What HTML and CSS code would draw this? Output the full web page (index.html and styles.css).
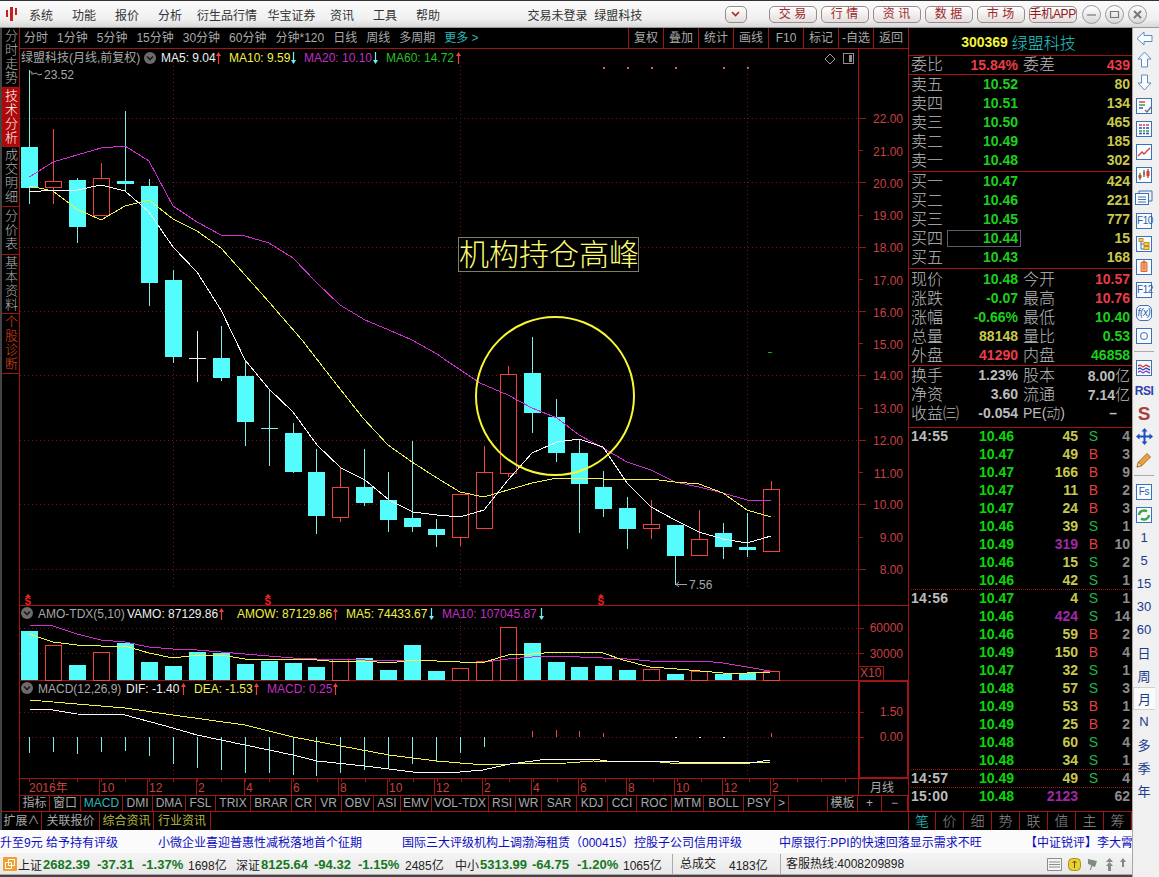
FILE: index.html
```html
<!DOCTYPE html>
<html lang="zh-CN">
<head>
    <meta charset="utf-8">
    <title>绿盟科技 月线</title>
    <link rel="stylesheet" href="styles.css">
</head>
<body>
<div class="window">
    <header class="titlebar">
        <svg class="logo" width="12" height="14" viewBox="0 0 12 14">
            <path class="logo-red" d="M0 3h2v7H0zM4 0h3v14H4zM9 1h2v7H9z"/>
        </svg>
        <nav class="menu">
            <span class="menu-item">系统</span>
            <span class="menu-item">功能</span>
            <span class="menu-item">报价</span>
            <span class="menu-item">分析</span>
            <span class="menu-item menu-wide5">衍生品行情</span>
            <span class="menu-item menu-wide4">华宝证券</span>
            <span class="menu-item">资讯</span>
            <span class="menu-item">工具</span>
            <span class="menu-item">帮助</span>
        </nav>
        <div class="login-state">交易未登录&nbsp; 绿盟科技</div>
        <button class="pill pill-drop">
            <svg width="9" height="6" viewBox="0 0 9 6"><path class="drop-mark" d="M1 1l3.5 3.5L8 1"/></svg>
        </button>
        <div class="pills">
            <button class="pill">交 易</button>
            <button class="pill">行 情</button>
            <button class="pill">资 讯</button>
            <button class="pill">数 据</button>
            <button class="pill">市 场</button>
            <button class="pill pill-app">手机APP</button>
        </div>
        <div class="win-btns">
            <span class="win-btn"><svg width="11" height="11" viewBox="0 0 11 11"><path class="win-mark" d="M1 6h9"/></svg></span>
            <span class="win-btn"><svg width="11" height="11" viewBox="0 0 11 11"><path class="win-mark" d="M1.5 2.5h8v6h-8z"/></svg></span>
            <span class="win-btn"><svg width="11" height="11" viewBox="0 0 11 11"><path class="win-mark win-mark-x" d="M2 2l7 7M9 2l-7 7"/></svg></span>
        </div>
    </header>

    <div class="body-row">
        <div class="content">
            <div class="top-block">
                <div class="left-stack">
                    <div class="chart-row">
                        <div class="side-tabs">
                            <div class="side-tab tab-h4">分时走势</div>
                            <div class="side-tab side-tab-on tab-h4">技术分析</div>
                            <div class="side-tab tab-h4">成交明细</div>
                            <div class="side-tab tab-h3">分价表</div>
                            <div class="side-tab tab-h4">基本资料</div>
                            <div class="side-tab side-tab-hot tab-h4">个股诊断</div>
                        </div>
                        <div class="chart-col">
                            <div class="toolbar">
                                <div class="periods">
                                    <span>分时</span><span>1分钟</span><span>5分钟</span><span>15分钟</span><span>30分钟</span><span>60分钟</span><span>分钟*120</span><span>日线</span><span>周线</span><span>多周期</span><span class="more">更多 &gt;</span>
                                </div>
                                <div class="tools">
                                    <span class="tool">复权</span><span class="tool">叠加</span><span class="tool">统计</span><span class="tool">画线</span><span class="tool">F10</span><span class="tool">标记</span><span class="tool">-自选</span><span class="tool">返回</span>
                                </div>
                            </div>

                            <svg class="chart" width="888" height="746" viewBox="20 49 888 746">
                                <defs>
                                    <g id="up"><path class="arrow-red" d="M3.5 1V12"/><path class="arrow-red-head" d="M3.5 0L6 4H1z"/></g>
                                    <g id="down"><path class="arrow-cy" d="M3.5 0V11"/><path class="arrow-cy-head" d="M3.5 12L6 8H1z"/></g>
                                    <g id="roll"><circle class="roll-bg" cx="6" cy="6" r="6"/><path class="roll-mark" d="M3 4.5L6 7.5L9 4.5"/></g>
                                    <g id="smark"><path class="s-head" d="M4 0L7 3H1z"/><text class="s-text" x="0.5" y="11">S</text></g>
                                </defs>

                                <!-- grid -->
                                <path class="grid" d="M20 118.5H858M20 182.5H858M20 247.5H858M20 311.5H858M20 375.5H858M20 440.5H858M20 504.5H858M20 569.5H858M20 628.5H858M20 653.5H858M20 712.5H858M20 737.5H858"/>
                                <path class="grid" d="M173.5 62V590M460.5 62V590M747.5 62V590M173.5 606V778M460.5 606V778M747.5 606V778"/>

                                <!-- frame -->
                                <path class="frame" d="M20 605.5H908M20 680.5H858M20 778.5H908M858.5 49V795"/>
                                <path class="frame-bold" d="M859 681H907.5V778H859z"/>
                                <path class="frame" d="M858 666.5H883.5V680"/>
                                <path class="frame" d="M99.5 779V795M147.5 779V795M196.5 779V795M244.5 779V795M291.5 779V795M338.5 779V795M387.5 779V795M434.5 779V795M482.5 779V795M531.5 779V795M578.5 779V795M626.5 779V795M674.5 779V795M722.5 779V795M770.5 779V795"/>
                                <path class="axis-ticks" d="M29 780.5H858"/>
                                <path class="frame" d="M858 118.5h8M858 150.5h5M858 182.5h8M858 215.5h5M858 247.5h8M858 279.5h5M858 311.5h8M858 343.5h5M858 375.5h8M858 408.5h5M858 440.5h8M858 472.5h5M858 504.5h8M858 537.5h5M858 569.5h8M858 628.5h6M858 653.5h6M858 712.5h6M858 737.5h6"/>

                                <!-- candles -->
                                <path class="wick-cy" d="M29.5 70V204M77.5 178V243M125.5 111V192M149.5 179V306M173.5 270V363M221.5 326V381M245.5 360V446M269.5 389V466M293.5 423V473M316.5 449V534M364.5 449V506M388.5 472V532M412.5 441V532M436.5 519V547M532.5 337V433M556.5 399V462M579.5 439V533M603.5 471V517M627.5 497V549M675.5 525V585M723.5 523V559M747.5 513V557"/>
                                <path class="wick-cy" d="M261 428.5H278"/>
                                <path class="wick-wh" d="M197.5 331V382M189 358.5H206"/>
                                <path class="wick-rd" d="M53.5 129V204M101.5 163V215M340.5 468V522M460.5 494V546M484.5 446V528M508.5 366V477M651.5 500V539M699.5 510V555M771.5 481V552"/>
                                <g class="body-dn">
                                    <rect x="21" y="147" width="17" height="41"/><rect x="69" y="180" width="17" height="47"/><rect x="117" y="181" width="17" height="3"/><rect x="141" y="186" width="17" height="97"/><rect x="165" y="280" width="17" height="77"/><rect x="213" y="358" width="17" height="20"/><rect x="237" y="376" width="17" height="46"/><rect x="285" y="433" width="17" height="39"/><rect x="308" y="472" width="17" height="44"/><rect x="356" y="487" width="17" height="16"/><rect x="380" y="500" width="17" height="20"/><rect x="404" y="518" width="17" height="9"/><rect x="428" y="529" width="17" height="6"/><rect x="524" y="373" width="17" height="40"/><rect x="548" y="417" width="17" height="36"/><rect x="571" y="453" width="17" height="31"/><rect x="595" y="487" width="17" height="22"/><rect x="619" y="508" width="17" height="21"/><rect x="667" y="525" width="17" height="31"/><rect x="715" y="533" width="17" height="14"/><rect x="739" y="547" width="17" height="3"/>
                                </g>
                                <g class="body-up">
                                    <rect x="45.5" y="181.5" width="16" height="6"/><rect x="93.5" y="178.5" width="16" height="37"/><rect x="332.5" y="487.5" width="16" height="30"/><rect x="452.5" y="494.5" width="16" height="43"/><rect x="476.5" y="472.5" width="16" height="56"/><rect x="500.5" y="374.5" width="16" height="99"/><rect x="643.5" y="524.5" width="16" height="4"/><rect x="691.5" y="539.5" width="16" height="16"/><rect x="763.5" y="489.5" width="16" height="62"/>
                                </g>

                                <!-- moving averages -->
                                <polyline class="ma ma20" points="29.5,177 53,162 77,155 101,148 125,146 149,161 173,206 197,222 221,235 245,236 269,243 293,258 317,283 340,305 365,320 389,330 412,340 437,354 450,363 480,383 508,395 532,408 557,418 579,435 603,448 627,462 651,470 675,482 699,487 723,493 747,500 771,501"/>
                                <polyline class="ma ma10" points="29.5,186 53,191 77,209 101,220 125,206 149,200 173,219 197,231 221,248 245,275 269,302 302,340 333,380 363,418 388,445 412,462 437,478 460,492 484,497 508,490 532,483 557,478 579,478 603,479 627,479 651,479 675,482 699,484 723,493 747,510 771,517"/>
                                <polyline class="ma ma5" points="29.5,192 53,190 77,190 101,185 125,191 149,212 173,247 197,272 221,310 245,360 269,389 293,412 317,445 341,468 365,480 389,500 413,512 437,515 460,517 484,510 508,480 532,453 557,442 579,439 603,447 627,483 651,507 675,520 699,532 723,539 747,543 771,536"/>

                                <!-- marks on the main chart -->
                                <path class="dots" d="M603 68h2M627 68h2M651 68h2M675 68h2M723 68h2M747 68h2"/>
                                <path class="green-dash" d="M768 352.5h4"/>
                                <path class="note-line" d="M30 72h2v3M33 74l3-1 3 2 3-1"/>
                                <path class="note-line" d="M676 584.5h11M679 582l-3 2.5 3 2.5"/>
                                <text class="t-gray" x="44" y="79">23.52</text>
                                <text class="t-gray" x="689" y="589">7.56</text>
                                <path class="note-line" d="M830 54l5 5-5 5-5-5z"/>
                                <rect class="mini-box" x="843.5" y="53.5" width="10" height="10"/>
                                <rect class="mini-fill" x="849" y="55" width="3" height="7"/>

                                <ellipse class="peak-ring" cx="555" cy="396" rx="79" ry="79"/>
                                <rect class="peak-box" x="458.5" y="237.5" width="180" height="34"/>
                                <text class="peak-text" x="459" y="265">机构持仓高峰</text>

                                <use href="#smark" x="24" y="594"/>
                                <use href="#smark" x="264" y="594"/>
                                <use href="#smark" x="597" y="594"/>

                                <!-- legend lines -->
                                <text class="t-gray" x="21" y="62">绿盟科技(月线,前复权)</text>
                                <use href="#roll" x="144" y="52"/>
                                <text class="t-white" x="161" y="62">MA5: 9.04</text><use href="#up" x="215" y="52"/>
                                <text class="t-yellow" x="229" y="62">MA10: 9.59</text><use href="#down" x="290" y="52"/>
                                <text class="t-magenta" x="304" y="62">MA20: 10.10</text><use href="#down" x="372" y="52"/>
                                <text class="t-green" x="386" y="62">MA60: 14.72</text><use href="#up" x="455" y="52"/>

                                <!-- axis labels -->
                                <g class="axis">
                                    <text x="903" y="123">22.00</text><text x="903" y="156">21.00</text><text x="903" y="188">20.00</text><text x="903" y="220">19.00</text><text x="903" y="252">18.00</text><text x="903" y="285">17.00</text><text x="903" y="317">16.00</text><text x="903" y="349">15.00</text><text x="903" y="380">14.00</text><text x="903" y="413">13.00</text><text x="903" y="445">12.00</text><text x="903" y="478">11.00</text><text x="903" y="509">10.00</text><text x="903" y="542">9.00</text><text x="903" y="574">8.00</text>
                                    <text x="903" y="632">60000</text><text x="903" y="658">30000</text><text x="903" y="716">1.50</text><text x="903" y="741">0.00</text>
                                </g>
                                <text class="t-axis" x="860" y="677">X10</text>

                                <!-- volume -->
                                <g class="body-dn">
                                    <rect x="21" y="631" width="17" height="49"/><rect x="69" y="665" width="17" height="15"/><rect x="117" y="643" width="17" height="37"/><rect x="141" y="662" width="17" height="18"/><rect x="165" y="666" width="17" height="14"/><rect x="189" y="652" width="17" height="28"/><rect x="213" y="653" width="17" height="27"/><rect x="237" y="664" width="17" height="16"/><rect x="261" y="661" width="17" height="19"/><rect x="285" y="663" width="17" height="17"/><rect x="308" y="667" width="17" height="13"/><rect x="356" y="658" width="17" height="22"/><rect x="380" y="670" width="17" height="10"/><rect x="404" y="645" width="17" height="35"/><rect x="428" y="671" width="17" height="9"/><rect x="524" y="643" width="17" height="37"/><rect x="548" y="662" width="17" height="18"/><rect x="571" y="667" width="17" height="13"/><rect x="595" y="666" width="17" height="14"/><rect x="619" y="670" width="17" height="10"/><rect x="667" y="674" width="17" height="6"/><rect x="715" y="674" width="17" height="6"/><rect x="739" y="673" width="17" height="7"/>
                                </g>
                                <g class="body-up">
                                    <rect x="45.5" y="645.5" width="16" height="35"/><rect x="93.5" y="652.5" width="16" height="28"/><rect x="332.5" y="659.5" width="16" height="21"/><rect x="452.5" y="668.5" width="16" height="12"/><rect x="476.5" y="661.5" width="16" height="19"/><rect x="500.5" y="627.5" width="16" height="53"/><rect x="643.5" y="669.5" width="16" height="11"/><rect x="691.5" y="671.5" width="16" height="9"/><rect x="763.5" y="671.5" width="16" height="9"/>
                                </g>
                                <polyline class="ma ma20" points="29.5,625 53,626 77,634 101,640 125,642 149,647 173,649 197,650 221,652 245,654 269,656 293,658 317,659 341,659 365,660 389,661 413,660 437,661 460,662 485,662 508,659 532,657 557,656 580,657 603,658 627,659 650,661 677,661 703,661 723,663 747,667 770,671"/>
                                <polyline class="ma ma10" points="29.5,634 53,642 77,645 101,646 125,646 149,653 173,658 197,655 221,655 245,659 269,659 293,659 317,660 341,662 365,661 389,663 413,660 437,661 460,662 485,662 508,655 532,654 557,652 580,652 603,653 623,660 650,667 677,669 700,671 723,673 747,673 770,672"/>

                                <use href="#roll" x="21" y="607"/>
                                <text class="t-gray" x="38" y="618">AMO-TDX(5,10)</text>
                                <text class="t-white" x="127" y="618">VAMO: 87129.86</text><use href="#up" x="218" y="608"/>
                                <text class="t-yellow" x="237" y="618">AMOW: 87129.86</text><use href="#up" x="332" y="608"/>
                                <text class="t-yellow" x="346" y="618">MA5: 74433.67</text><use href="#down" x="428" y="608"/>
                                <text class="t-magenta" x="442" y="618">MA10: 107045.87</text><use href="#down" x="538" y="608"/>

                                <!-- MACD -->
                                <path class="wick-cy" d="M29.5 737V753M53.5 737V752M77.5 737V754M101.5 737V752M125.5 737V751M149.5 737V756M173.5 737V764M197.5 737V768M221.5 737V770M245.5 737V773M269.5 737V773M293.5 737V775M316.5 737V776M340.5 737V773M364.5 737V770M388.5 737V768M412.5 737V764M436.5 737V762M460.5 737V753M484.5 737V747"/>
                                <path class="wick-rd" d="M532.5 731V737M556.5 730V737M579.5 731V737M603.5 733V737M771.5 733V737"/>
                                <path class="wick-wh" d="M675 737.5h2M699 737.5h2M723 737.5h2"/>
                                <polyline class="ma ma10" points="29.5,700 125,708 173,715 245,725 293,737 341,746 389,755 437,761 460,763 473,764 510,764 567,763 593,761 660,762 670,763 750,763 770,762"/>
                                <polyline class="ma ma5" points="29.5,709 53,710 77,714 125,715 173,728 197,735 245,745 293,755 317,761 365,766 413,772 437,773 460,772 483,770 510,764 533,761 547,759 592,759 607,761 750,763 770,760"/>

                                <use href="#roll" x="21" y="682"/>
                                <text class="t-gray" x="38" y="693">MACD(12,26,9)</text>
                                <text class="t-white" x="126" y="693">DIF: -1.40</text><use href="#up" x="180" y="683"/>
                                <text class="t-yellow" x="194" y="693">DEA: -1.53</text><use href="#up" x="253" y="683"/>
                                <text class="t-magenta" x="267" y="693">MACD: 0.25</text><use href="#up" x="332" y="683"/>

                                <!-- time axis -->
                                <g class="t-axis">
                                    <text x="29" y="792">2016年</text><text x="101" y="792">10</text><text x="149" y="792">12</text><text x="198" y="792">2</text><text x="246" y="792">4</text><text x="293" y="792">6</text><text x="340" y="792">8</text><text x="389" y="792">10</text><text x="436" y="792">12</text><text x="484" y="792">2</text><text x="533" y="792">4</text><text x="580" y="792">6</text><text x="628" y="792">8</text><text x="676" y="792">10</text><text x="724" y="792">12</text><text x="772" y="792">2</text>
                                </g>
                                <text class="t-gray" x="870" y="792">月线</text>
                            </svg>

                            <div class="index-tabs">
                                <span class="idx">指标</span><span class="idx">窗口</span><span class="idx idx-on">MACD</span><span class="idx">DMI</span><span class="idx">DMA</span><span class="idx">FSL</span><span class="idx">TRIX</span><span class="idx">BRAR</span><span class="idx">CR</span><span class="idx">VR</span><span class="idx">OBV</span><span class="idx">ASI</span><span class="idx">EMV</span><span class="idx">VOL-TDX</span><span class="idx">RSI</span><span class="idx">WR</span><span class="idx">SAR</span><span class="idx">KDJ</span><span class="idx">CCI</span><span class="idx">ROC</span><span class="idx">MTM</span><span class="idx">BOLL</span><span class="idx">PSY</span><span class="idx">&gt;</span><span class="idx"></span><span class="idx">模板</span><span class="idx">+</span><span class="idx">−</span>
                            </div>
                        </div>
                    </div>
                    <div class="ext-tabs">
                        <span class="ext">扩展∧</span><span class="ext">关联报价</span><span class="ext ext-on">综合资讯</span><span class="ext ext-on">行业资讯</span>
                    </div>
                </div>

                <aside class="quote">
                    <div class="q-head"><span class="q-code">300369</span><span class="q-name">绿盟科技</span></div>
                    <div class="q-group q-ratio">
                        <div class="q-row"><span>委比</span><b class="red">15.84%</b><span class="q-l2">委差</span><b class="red">439</b></div>
                    </div>
                    <div class="q-group q-book">
                        <div class="q-row"><span>卖五</span><b class="grn">10.52</b><span></span><b class="yel">80</b></div>
                        <div class="q-row"><span>卖四</span><b class="grn">10.51</b><span></span><b class="yel">134</b></div>
                        <div class="q-row"><span>卖三</span><b class="grn">10.50</b><span></span><b class="yel">465</b></div>
                        <div class="q-row"><span>卖二</span><b class="grn">10.49</b><span></span><b class="yel">185</b></div>
                        <div class="q-row"><span>卖一</span><b class="grn">10.48</b><span></span><b class="yel">302</b></div>
                    </div>
                    <div class="q-group q-book">
                        <div class="q-row"><span>买一</span><b class="grn">10.47</b><span></span><b class="yel">424</b></div>
                        <div class="q-row"><span>买二</span><b class="grn">10.46</b><span></span><b class="yel">221</b></div>
                        <div class="q-row"><span>买三</span><b class="grn">10.45</b><span></span><b class="yel">777</b></div>
                        <div class="q-row"><span>买四</span><b class="grn q-focus">10.44</b><span></span><b class="yel">15</b></div>
                        <div class="q-row"><span>买五</span><b class="grn">10.43</b><span></span><b class="yel">168</b></div>
                    </div>
                    <div class="q-group q-book q-pad">
                        <div class="q-row"><span>现价</span><b class="grn">10.48</b><span class="q-l2">今开</span><b class="red">10.57</b></div>
                        <div class="q-row"><span>涨跌</span><b class="grn">-0.07</b><span class="q-l2">最高</span><b class="red">10.76</b></div>
                        <div class="q-row"><span>涨幅</span><b class="grn">-0.66%</b><span class="q-l2">最低</span><b class="grn">10.40</b></div>
                        <div class="q-row"><span>总量</span><b class="yel">88148</b><span class="q-l2">量比</span><b class="grn">0.53</b></div>
                        <div class="q-row"><span>外盘</span><b class="red">41290</b><span class="q-l2">内盘</span><b class="grn">46858</b></div>
                    </div>
                    <div class="q-group q-stats">
                        <div class="q-row"><span>换手</span><b>1.23%</b><span class="q-l2">股本</span><b>8.00<i>亿</i></b></div>
                        <div class="q-row"><span>净资</span><b>3.60</b><span class="q-l2">流通</span><b>7.14<i>亿</i></b></div>
                        <div class="q-row"><span class="q-nowrap">收益㈢</span><b>-0.054</b><span class="q-l2 q-nowrap q-pe">PE(动)</span><b class="q-dash">–</b></div>
                    </div>
                    <div class="ticks">
                        <div class="tick-group">
                            <div class="tick"><span class="tm">14:55</span><b class="pr">10.46</b><b class="vl">45</b><b class="sd-s">S</b><b class="ct">4</b></div>
                            <div class="tick"><span></span><b class="pr">10.47</b><b class="vl">49</b><b class="sd-b">B</b><b class="ct">3</b></div>
                            <div class="tick"><span></span><b class="pr">10.47</b><b class="vl">166</b><b class="sd-b">B</b><b class="ct">9</b></div>
                            <div class="tick"><span></span><b class="pr">10.47</b><b class="vl">11</b><b class="sd-b">B</b><b class="ct">2</b></div>
                            <div class="tick"><span></span><b class="pr">10.47</b><b class="vl">24</b><b class="sd-b">B</b><b class="ct">3</b></div>
                            <div class="tick"><span></span><b class="pr">10.46</b><b class="vl">39</b><b class="sd-s">S</b><b class="ct">1</b></div>
                            <div class="tick"><span></span><b class="pr">10.49</b><b class="vl vl-big">319</b><b class="sd-b">B</b><b class="ct">10</b></div>
                            <div class="tick"><span></span><b class="pr">10.46</b><b class="vl">15</b><b class="sd-s">S</b><b class="ct">2</b></div>
                            <div class="tick"><span></span><b class="pr">10.46</b><b class="vl">42</b><b class="sd-s">S</b><b class="ct">1</b></div>
                        </div>
                        <div class="tick-group tick-next">
                            <div class="tick"><span class="tm">14:56</span><b class="pr">10.47</b><b class="vl">4</b><b class="sd-s">S</b><b class="ct">1</b></div>
                            <div class="tick"><span></span><b class="pr">10.46</b><b class="vl vl-big">424</b><b class="sd-s">S</b><b class="ct">14</b></div>
                            <div class="tick"><span></span><b class="pr">10.46</b><b class="vl">59</b><b class="sd-b">B</b><b class="ct">2</b></div>
                            <div class="tick"><span></span><b class="pr">10.49</b><b class="vl">150</b><b class="sd-b">B</b><b class="ct">4</b></div>
                            <div class="tick"><span></span><b class="pr">10.47</b><b class="vl">32</b><b class="sd-s">S</b><b class="ct">1</b></div>
                            <div class="tick"><span></span><b class="pr">10.48</b><b class="vl">57</b><b class="sd-s">S</b><b class="ct">3</b></div>
                            <div class="tick"><span></span><b class="pr">10.49</b><b class="vl">53</b><b class="sd-b">B</b><b class="ct">1</b></div>
                            <div class="tick"><span></span><b class="pr">10.49</b><b class="vl">25</b><b class="sd-b">B</b><b class="ct">2</b></div>
                            <div class="tick"><span></span><b class="pr">10.48</b><b class="vl">60</b><b class="sd-s">S</b><b class="ct">4</b></div>
                            <div class="tick"><span></span><b class="pr">10.48</b><b class="vl">34</b><b class="sd-s">S</b><b class="ct">1</b></div>
                        </div>
                        <div class="tick-group tick-next">
                            <div class="tick"><span class="tm">14:57</span><b class="pr">10.49</b><b class="vl">49</b><b class="sd-s">S</b><b class="ct">4</b></div>
                        </div>
                        <div class="tick-group tick-next">
                            <div class="tick"><span class="tm">15:00</span><b class="pr">10.48</b><b class="vl vl-big">2123</b><b></b><b class="ct">62</b></div>
                        </div>
                    </div>
                    <div class="q-tabs">
                        <span class="q-tab q-tab-on">笔</span><span class="q-tab">价</span><span class="q-tab">细</span><span class="q-tab">势</span><span class="q-tab">联</span><span class="q-tab">值</span><span class="q-tab">主</span><span class="q-tab">筹</span>
                    </div>
                </aside>
            </div>

            <div class="ticker">
                <span>升至9元&nbsp;给予持有评级</span>
                <span>小微企业喜迎普惠性减税落地首个征期</span>
                <span>国际三大评级机构上调渤海租赁（000415）控股子公司信用评级</span>
                <span>中原银行:PPI的快速回落显示需求不旺</span>
                <span>【中证锐评】李大霄</span>
            </div>

            <div class="status">
                <div class="st-cells">
                    <svg class="st-icon" width="14" height="14" viewBox="0 0 14 14">
                        <rect class="st-icon-bg" width="14" height="14" rx="1"/>
                        <path class="st-icon-mark" d="M5.5 2.5h6v6h-6zM2.5 5.5h6v6h-6z"/>
                    </svg>
                    <span class="st-name">上证</span><b class="st-val">2682.39</b><b class="st-val">-37.31</b><b class="st-val">-1.37%</b><span class="st-amt">1698亿</span>
                    <span class="st-name">深证</span><b class="st-val">8125.64</b><b class="st-val">-94.32</b><b class="st-val">-1.15%</b><span class="st-amt">2485亿</span>
                    <span class="st-name">中小</span><b class="st-val">5313.99</b><b class="st-val">-64.75</b><b class="st-val">-1.20%</b><span class="st-amt">1065亿</span>
                    <span class="st-name st-div">总成交</span><span class="st-amt">4183亿</span>
                    <span class="st-amt st-div st-hot">客服热线:4008209898</span>
                </div>
                <div class="st-tools">
                    <svg width="15" height="13" viewBox="0 0 15 13"><path class="st-doc" d="M.5.5h14v12H.5zM2 4h11M2 6.5h11M2 9h11"/></svg>
                    <svg width="13" height="13" viewBox="0 0 13 13"><rect class="st-coin" x=".5" y=".5" width="12" height="12" rx="4"/><path class="st-coin-mark" d="M6.5 3v7M4.5 5l2-2 2 2"/></svg>
                    <svg width="12" height="13" viewBox="0 0 12 13"><path class="st-gray" d="M1 1l9 2-2 6-3-1-1 4-1 0 1-5-3-1z"/></svg>
                    <svg width="9" height="13" viewBox="0 0 9 13"><path class="st-gray" d="M4.5 0L8 4H1zM4.5 4L8 8H1zM3 8h3v5H3z"/></svg>
                    <svg width="6" height="13" viewBox="0 0 6 13"><path class="st-gray" d="M3 0L6 4H0zM2 4h2v5H2z"/></svg>
                </div>
            </div>
        </div>

        <aside class="sidebar">
            <div class="sb sb-first"><svg width="17" height="15" viewBox="0 0 17 15"><path class="ic-arrow" d="M1 7.5L8 1v3.5h8v6H8V14z"/></svg></div>
            <div class="sb"><svg width="15" height="17" viewBox="0 0 15 17"><path class="ic-arrow" d="M7.5 1L14 8h-3.5v8h-6V8H1z"/></svg></div>
            <div class="sb"><svg width="15" height="17" viewBox="0 0 15 17"><path class="ic-arrow" d="M7.5 16L14 9h-3.5V1h-6v8H1z"/></svg></div>
            <div class="sb"><svg width="16" height="16" viewBox="0 0 16 16"><rect class="ic-box" x=".5" y=".5" width="15" height="15"/><path class="ic-red" d="M3 4h6"/><path class="ic-grn" d="M3 7h6"/><path class="ic-blu" d="M3 10h4"/><path class="ic-gry" d="M9 12l2 2 4-5"/></svg></div>
            <div class="sb"><svg width="16" height="16" viewBox="0 0 16 16"><rect class="ic-box" x=".5" y=".5" width="15" height="15"/><path class="ic-red" d="M3 4h3M7 4h2M10 4h3"/><path class="ic-blu" d="M3 7h3M7 7h2M10 7h3"/><path class="ic-grn" d="M3 10h3M7 10h2M10 10h3"/><path class="ic-blu" d="M3 12.5h3M7 12.5h2M10 12.5h3"/></svg></div>
            <div class="sb"><svg width="16" height="16" viewBox="0 0 16 16"><rect class="ic-box" x=".5" y=".5" width="15" height="15"/><path class="ic-red" d="M2 12l4-4 2 2 6-6"/></svg></div>
            <div class="sb"><svg width="16" height="16" viewBox="0 0 16 16"><rect class="ic-box" x=".5" y=".5" width="15" height="15"/><path class="ic-grn" d="M4 6v7M8 3v7"/><path class="ic-red ic-thick" d="M4 8v3M12 4v5"/><path class="ic-red" d="M8 5v3M12 2v9"/></svg></div>
            <div class="sb"><svg width="18" height="16" viewBox="0 0 18 16"><path class="ic-line" d="M4 3.5V1h13v10h-3"/><rect class="ic-box" x=".5" y="3.5" width="13" height="11"/><path class="ic-line" d="M3 7h8M3 9.5h8M3 12h8"/></svg></div>
            <div class="sb"><span class="ic-text">F10</span></div>
            <div class="sb"><svg width="16" height="16" viewBox="0 0 16 16"><rect class="ic-box" x=".5" y=".5" width="15" height="15"/><path class="ic-line" d="M5 5v8h3M5 8h3"/><rect class="ic-yel" x="3" y="2.5" width="4" height="3"/><rect class="ic-yel" x="8" y="6.5" width="5" height="3"/><rect class="ic-yel" x="8" y="10.5" width="5" height="3"/></svg></div>
            <div class="sb"><svg width="16" height="16" viewBox="0 0 16 16"><rect class="ic-box" x=".5" y=".5" width="15" height="15"/><path class="ic-org" d="M5 3.5h6v9H5zM6.5 6h3M6.5 8h3M6.5 10h3M7 2h2v2H7z"/></svg></div>
            <div class="sb"><span class="ic-text">F12</span></div>
            <div class="sb"><span class="ic-text ic-fx">f(x)</span></div>
            <div class="sb"><svg width="16" height="16" viewBox="0 0 16 16"><rect class="ic-box" x=".5" y=".5" width="15" height="15"/><circle class="ic-line" cx="8" cy="8" r="3.5"/></svg></div>
            <div class="sb-sep"></div>
            <div class="sb"><svg width="16" height="16" viewBox="0 0 16 16"><rect class="ic-box" x=".5" y=".5" width="15" height="15"/><path class="ic-red" d="M2 6l2-1 3 2 3-2 4 2"/><path class="ic-blu" d="M2 9l2-1 3 2 3-2 4 2"/><path class="ic-vio" d="M2 12l2-1 3 2 3-2 4 2"/></svg></div>
            <div class="sb"><span class="ic-rsi">RSI</span></div>
            <div class="sb"><span class="ic-s">S</span></div>
            <div class="sb"><svg width="17" height="17" viewBox="0 0 17 17"><path class="ic-move" d="M8.5 0l3 3.5H9.5V7.5h4V5.5l3.500 3-3.500 3v-2h-4v4h2l-3 3.500-3-3.500h2v-4h-4v2L0 8.500l3.500-3v2h4v-4h-2z"/></svg></div>
            <div class="sb"><svg width="16" height="16" viewBox="0 0 16 16"><path class="ic-pencil" d="M1 15l1.5-5L11 1.5 14.500 5 6 13.500z"/><path class="ic-tip" d="M1 15l1.5-5 3.500 3.500z"/></svg></div>
            <div class="sb-sep"></div>
            <div class="sb"><span class="ic-text">Fs</span></div>
            <div class="sb"><svg width="16" height="16" viewBox="0 0 16 16"><rect class="ic-box" x=".5" y=".5" width="15" height="15"/><path class="ic-refresh" d="M3 8a5 5 0 0 1 8-3.5M13 8a5 5 0 0 1-8 3.5"/></svg></div>
            <div class="sb sb-label">1</div>
            <div class="sb sb-label">5</div>
            <div class="sb sb-label">15</div>
            <div class="sb sb-label">30</div>
            <div class="sb sb-label">60</div>
            <div class="sb sb-label">日</div>
            <div class="sb sb-label">周</div>
            <div class="sb sb-label sb-on">月</div>
            <div class="sb sb-label">N</div>
            <div class="sb sb-label">多</div>
            <div class="sb sb-label">季</div>
            <div class="sb sb-label">年</div>
        </aside>
    </div>
</div>
</body>
</html>
```

FILE: styles.css
```css
* {
    box-sizing: border-box;
}
html, body {
    margin: 0;
    padding: 0;
    background-color: #444;
    overflow: hidden;
}
body {
    font-family: "Liberation Sans", "Noto Sans CJK SC", sans-serif;
    font-size: 12px;
}
button {
    font-family: inherit;
}
.window {
    width: 1159px;
    height: 877px;
    display: flex;
    flex-direction: column;
    overflow: hidden;
}

/* title bar */
.titlebar {
    height: 28px;
    flex: none;
    display: flex;
    align-items: center;
    background: linear-gradient(#fbfbfb, #f0f0f0 70%, #d8d8d8);
    border-top: 1px solid #333;
    border-bottom: 1px solid #999;
    padding-left: 6px;
    color: #333;
}
.logo {
    flex: none;
}
.logo-red {
    fill: #c81e1e;
}
.menu {
    display: flex;
    margin-left: 1.5px;
    width: 508px;
}
.menu-item {
    width: 43px;
    text-align: center;
    flex: none;
}
.menu-wide5 {
    width: 71px;
}
.menu-wide4 {
    width: 58px;
}
.login-state {
    width: 197px;
    white-space: nowrap;
}
.pills {
    display: flex;
    gap: 4px;
    margin-left: 22px;
}
.pill {
    width: 48px;
    height: 17px;
    padding: 0;
    border: 1px solid #9a8a8a;
    border-radius: 5px;
    background: linear-gradient(#ffffff, #e4dddd);
    color: #a02828;
    font-size: 12px;
    line-height: 15px;
    white-space: nowrap;
}
.pill-drop {
    width: 22px;
    margin-left: 0;
    display: flex;
    align-items: center;
    justify-content: center;
}
.pill-app {
    color: #8c1818;
    letter-spacing: -0.3px;
}
.drop-mark {
    fill: none;
    stroke: #a02828;
    stroke-width: 1.6;
}
.win-btns {
    display: flex;
    gap: 4px;
    margin-left: 5px;
}
.win-btn {
    width: 19px;
    height: 19px;
    border: 1px solid #9a9a9a;
    border-radius: 50%;
    background: linear-gradient(#fff, #d8d8d8);
    display: flex;
    align-items: center;
    justify-content: center;
}
.win-mark {
    fill: none;
    stroke: #777;
    stroke-width: 1.2;
}
.win-mark-x {
    stroke-width: 2;
}

/* main layout */
.body-row {
    flex: 1;
    min-height: 0;
    display: flex;
}
.content {
    width: 1132px;
    flex: none;
    display: flex;
    flex-direction: column;
}
.top-block {
    height: 802px;
    display: flex;
    background-color: #000;
    margin-left: 2px;
}
.left-stack {
    width: 906px;
    flex: none;
    display: flex;
    flex-direction: column;
}
.chart-row {
    height: 783px;
    display: flex;
}

/* vertical tabs */
.side-tabs {
    width: 18px;
    flex: none;
    border-right: 1px solid #a01414;
}
.side-tab {
    writing-mode: vertical-rl;
    font-size: 13px;
    line-height: 17px;
    letter-spacing: 1px;
    color: #b4b4b4;
    border-bottom: 1px solid #a01414;
    text-align: center;
    font-weight: 300;
    width: 17px;
}
.tab-h4 {
    height: 59.5px;
}
.tab-h3 {
    height: 48px;
}
.side-tab-on {
    background-color: #b00808;
    color: #fff;
}
.side-tab-hot {
    color: #e2481c;
}

/* toolbar */
.chart-col {
    width: 888px;
    flex: none;
    display: flex;
    flex-direction: column;
}
.toolbar {
    height: 21px;
    flex: none;
    display: flex;
    justify-content: space-between;
    border-bottom: 1px solid #a01414;
    color: #a8a8a8;
    line-height: 20px;
}
.periods {
    display: flex;
    gap: 9px;
    padding-left: 4px;
    white-space: nowrap;
}
.more {
    color: #2ab8b8;
}
.tools {
    display: flex;
}
.tool {
    width: 35px;
    text-align: center;
    border-left: 1px solid #a01414;
    white-space: nowrap;
}

/* chart */
.chart {
    display: block;
    flex: none;
}
.chart text {
    font-family: "Liberation Sans", "Noto Sans CJK SC", sans-serif;
    font-size: 12px;
}
.grid {
    fill: none;
    stroke: #701818;
    stroke-dasharray: 1 3;
}
.frame {
    fill: none;
    stroke: #a01414;
    shape-rendering: crispEdges;
}
.frame-bold {
    fill: none;
    stroke: #a01414;
    stroke-width: 2;
    shape-rendering: crispEdges;
}
.axis-ticks {
    fill: none;
    stroke: #a01414;
    stroke-width: 3;
    stroke-dasharray: 1 23;
}
.wick-cy, .wick-rd, .wick-wh {
    fill: none;
    shape-rendering: crispEdges;
}
.wick-cy {
    stroke: #7cecec;
}
.wick-rd {
    stroke: #e84848;
}
.wick-wh {
    stroke: #f0f0f0;
}
.body-dn {
    fill: #54fcfc;
    shape-rendering: crispEdges;
}
.body-up {
    fill: #000;
    stroke: #f04040;
    shape-rendering: crispEdges;
}
.ma {
    fill: none;
    stroke-width: 1;
    shape-rendering: crispEdges;
}
.ma5 {
    stroke: #f8f8f8;
}
.ma10 {
    stroke: #f4f448;
}
.ma20 {
    stroke: #d030d0;
}
.dots {
    fill: none;
    stroke: #c050c0;
    stroke-width: 2;
}
.green-dash {
    fill: none;
    stroke: #20a020;
}
.note-line {
    fill: none;
    stroke: #a0a0a0;
}
.mini-box {
    fill: none;
    stroke: #909090;
}
.mini-fill {
    fill: #909090;
}
.peak-ring {
    fill: none;
    stroke: #f8f830;
    stroke-width: 2;
}
.peak-box {
    fill: #000;
    stroke: #808060;
}
.chart .peak-text {
    font-family: "Noto Sans CJK SC", sans-serif;
    font-size: 30px;
    font-weight: 300;
    fill: #fcfc70;
}
.t-gray {
    fill: #a8a8a8;
}
.t-white {
    fill: #f0f0f0;
}
.t-yellow {
    fill: #f0f048;
}
.t-magenta {
    fill: #c030c0;
}
.t-green {
    fill: #28c028;
}
.t-axis {
    fill: #c84040;
}
.axis text {
    fill: #c84040;
    text-anchor: end;
}
.arrow-red, .arrow-cy {
    fill: none;
    stroke-width: 1.2;
}
.arrow-red {
    stroke: #f04040;
}
.arrow-red-head {
    fill: #f04040;
}
.arrow-cy {
    stroke: #70f0f0;
}
.arrow-cy-head {
    fill: #70f0f0;
}
.roll-bg {
    fill: #6c6c6c;
}
.roll-mark {
    fill: none;
    stroke: #1c1c1c;
    stroke-width: 1.6;
}
.s-head {
    fill: #f02020;
}
.chart .s-text {
    font-size: 10px;
    font-weight: 700;
    fill: #f02020;
}

/* tabs under the chart */
.index-tabs {
    height: 16px;
    flex: none;
    display: grid;
    grid-template-columns: 30px 31px 42px 30px 33px 30px 35px 41px 24px 26px 32px 27px 31px 57px 27px 26px 35px 31px 29px 35px 32px 40px 31px 14px 39px 30px 24px 26px;
    color: #a8a8a8;
    line-height: 15px;
    border-top: 1px solid #a01414;
}
.idx {
    text-align: center;
    border-right: 1px solid #a01414;
    white-space: nowrap;
    overflow: hidden;
}
.idx-on {
    color: #2ab8b8;
}
.ext-tabs {
    height: 19px;
    flex: none;
    display: grid;
    grid-template-columns: 40px 58px 54px 57px;
    border-top: 1px solid #a01414;
    color: #a8a8a8;
    line-height: 18px;
}
.ext {
    text-align: center;
    border-right: 1px solid #a01414;
    border-bottom: 1px solid #a01414;
    white-space: nowrap;
}
.ext-on {
    color: #b8b83c;
}

/* quote panel */
.quote {
    width: 224px;
    flex: none;
    border-left: 1px solid #a01414;
    display: flex;
    flex-direction: column;
    color: #bcbcbc;
}
.q-head {
    height: 28px;
    flex: none;
    display: flex;
    align-items: center;
    justify-content: center;
    gap: 4px;
    border-bottom: 1px solid #a01414;
    padding-right: 4px;
}
.q-code {
    color: #f4f438;
    font-size: 14px;
    font-weight: 700;
}
.q-name {
    color: #28c8c8;
    font-size: 16px;
    font-weight: 300;
}
.q-group {
    flex: none;
    border-bottom: 1px solid #a01414;
    padding-left: 2px;
}
.q-ratio {
    height: 19px;
}
.q-ratio .q-row {
    line-height: 18px;
}
.q-book {
    height: 97px;
    padding-top: 0;
}
.q-pad {
    padding-top: 1px;
}
.q-stats {
    height: 62px;
}
.q-row {
    display: grid;
    grid-template-columns: 32px 75px 40px 72px;
    height: 19px;
    line-height: 19px;
    font-size: 16px;
    font-weight: 300;
}
.q-row b {
    font-size: 14px;
    font-weight: 700;
    text-align: right;
    white-space: nowrap;
}
.q-row i {
    font-style: normal;
    font-size: 15px;
    font-weight: 300;
}
.q-l2 {
    padding-left: 5px;
}
.q-nowrap {
    white-space: nowrap;
}
.q-pe {
    font-size: 14px;
}
.q-dash {
    padding-right: 13px;
}
.q-focus {
    margin: 1px -3px 1px 4px;
    padding-right: 2px;
    border: 1px solid #5c5c6c;
    line-height: 15px;
}
.red {
    color: #ec3c48;
}
.grn {
    color: #1cd01c;
}
.yel {
    color: #c8c84c;
}

/* ticks */
.ticks {
    flex: 1;
    min-height: 0;
    padding-left: 2px;
}
.tick-next {
    border-top: 1px dotted #a01414;
    margin-top: -1px;
}
.tick {
    display: grid;
    grid-template-columns: 40px 63px 64px 30px 22px;
    height: 18px;
    line-height: 17px;
    font-size: 14px;
}
.tick b {
    font-weight: 700;
    text-align: right;
}
.tm {
    font-weight: 700;
    color: #bcbcbc;
    letter-spacing: 0.3px;
}
.tick .pr {
    color: #08d808;
}
.vl {
    color: #c8c84c;
}
.tick .vl-big {
    color: #a028a8;
}
.tick .sd-s, .tick .sd-b {
    font-weight: 400;
    text-align: center;
    padding-left: 1px;
}
.sd-s {
    color: #20b848;
}
.sd-b {
    color: #e04040;
}
.ct {
    color: #8c8c8c;
}
.q-tabs {
    height: 19px;
    flex: none;
    display: grid;
    grid-template-columns: 27px repeat(7, 28px);
    border-top: 1px solid #a01414;
    font-size: 14px;
    line-height: 18px;
    color: #8c8c8c;
    font-weight: 300;
}
.q-tab {
    text-align: center;
    border-right: 1px solid #a01414;
}
.q-tab-on {
    color: #2ac8c8;
}

/* news ticker */
.ticker {
    height: 23px;
    flex: none;
    display: grid;
    grid-template-columns: 158px 244px 377px 246px 1fr;
    background-color: #fbfbfb;
    color: #0c0cc0;
    line-height: 26px;
    white-space: nowrap;
    overflow: hidden;
}

/* status bar */
.status {
    height: 22px;
    flex: none;
    display: flex;
    align-items: center;
    justify-content: space-between;
    padding: 1px 6px 0 3px;
    background: linear-gradient(#f4f4f4, #e8e8e8);
    color: #222;
    white-space: nowrap;
    border-bottom: 1px solid #aaa;
}
.st-cells {
    display: grid;
    grid-template-columns: 15px 25px 54px 45px 46px 48px 25px 53px 44px 47px 50px 25px 52px 45px 46px 49px 57px 51px auto;
    align-items: center;
}
.st-icon-bg {
    fill: #f0a030;
}
.st-icon-mark {
    fill: none;
    stroke: #fff;
}
.st-val {
    font-size: 13px;
    color: #14781e;
}
.st-div {
    border-left: 1px solid #aaa;
    line-height: 20px;
    padding-left: 7px;
}
.st-hot {
    padding-left: 5px;
}
.st-tools {
    display: flex;
    align-items: center;
    gap: 6px;
}
.st-doc {
    fill: #f4f4f4;
    stroke: #8c8c8c;
}
.st-coin {
    fill: #e8d030;
    stroke: #a89018;
}
.st-coin-mark {
    fill: none;
    stroke: #605010;
}
.st-gray {
    fill: #808c80;
}

/* right sidebar */
.sidebar {
    width: 27px;
    flex: none;
    background-color: #f0f0f0;
    border-left: 1px solid #a8a8a8;
    display: flex;
    flex-direction: column;
    padding-right: 4px;
}
.sb {
    height: 23px;
    flex: none;
    display: flex;
    align-items: center;
    justify-content: center;
}
.sb-first {
    height: 20px;
}
.sb-sep {
    height: 9px;
    flex: none;
    margin: 0 1px;
    background: linear-gradient(transparent 4px, #aaa 4px, #aaa 5px, transparent 5px);
}
.sb-label {
    color: #1a3c8c;
    font-size: 13px;
}
.sb-on {
    background-color: #fbfbfb;
    border: 1px solid #d0d0d0;
    border-right: 0;
}
.ic-arrow {
    fill: #fbfdff;
    stroke: #5c8cc8;
}
.ic-box {
    fill: #fbfcff;
    stroke: #3c70b8;
}
.ic-line {
    fill: none;
    stroke: #3c70b8;
}
.ic-red, .ic-grn, .ic-blu, .ic-gry, .ic-vio {
    fill: none;
    stroke-width: 1.4;
}
.ic-red {
    stroke: #d83c3c;
}
.ic-thick {
    stroke-width: 3;
}
.ic-grn {
    stroke: #2c9c3c;
}
.ic-blu {
    stroke: #3048c0;
}
.ic-gry {
    stroke: #707070;
}
.ic-vio {
    stroke: #8848c8;
}
.ic-yel {
    fill: #f0d050;
    stroke: #c09020;
}
.ic-org {
    fill: #f4b080;
    stroke: #d86830;
}
.ic-text {
    width: 16px;
    height: 16px;
    background-color: #fbfcff;
    border: 1px solid #3c70b8;
    color: #2c60a8;
    font-size: 10px;
    line-height: 14px;
    text-align: center;
    white-space: nowrap;
    letter-spacing: -0.4px;
}
.ic-fx {
    border-radius: 5px;
    font-style: italic;
}
.ic-rsi {
    color: #2c40b0;
    font-size: 12px;
    font-weight: 700;
    letter-spacing: -0.5px;
}
.ic-s {
    color: #a84040;
    font-size: 19px;
    font-weight: 700;
}
.ic-move {
    fill: #1c50c0;
}
.ic-pencil {
    fill: #e8a040;
    stroke: #a87028;
}
.ic-tip {
    fill: #f4e0c0;
    stroke: #a87028;
}
.ic-refresh {
    fill: none;
    stroke: #38a848;
    stroke-width: 2.4;
}
```
